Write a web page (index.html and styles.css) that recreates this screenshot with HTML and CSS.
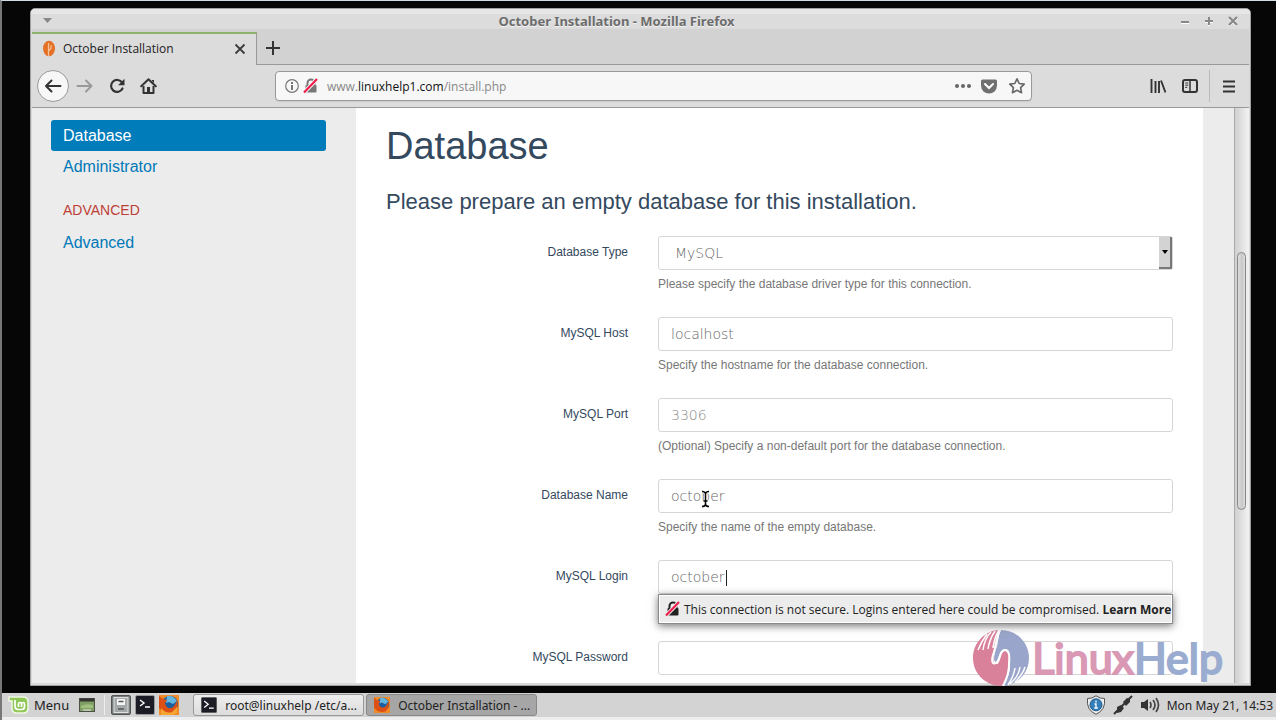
FILE: index.html
```html
<!DOCTYPE html>
<html lang="en">
<head>
<meta charset="utf-8">
<title>October Installation</title>
<link rel="stylesheet" href="styles.css">
</head>
<body>
<div class="desktop">
  <section class="window">
    <header class="titlebar">
      <button class="title-btn" aria-label="Window menu"><svg width="10" height="6"><path d="M0 0h9L4.500 5z" fill="#888"/></svg></button>
      <h1 class="window-title">October Installation - Mozilla Firefox</h1>
      <div class="window-controls">
        <button class="title-btn" aria-label="Minimize"><svg width="10" height="10"><path d="M1 7h8" stroke="#fff" stroke-width="2"/><path d="M1 6h8" stroke="#888" stroke-width="2"/></svg></button>
        <button class="title-btn" aria-label="Maximize"><svg width="10" height="10"><path d="M1 6h8M5 2v8" stroke="#fff" stroke-width="2"/><path d="M1 5h8M5 1v8" stroke="#888" stroke-width="2"/></svg></button>
        <button class="title-btn" aria-label="Close"><svg width="10" height="10"><path d="M1 2l8 8M9 2l-8 8" stroke="#fff" stroke-width="2"/><path d="M1 1l8 8M9 1l-8 8" stroke="#888" stroke-width="2.200"/></svg></button>
      </div>
    </header>
    <div class="browser">
      <nav class="tabs" aria-label="Tabs">
        <div class="tab">
          <svg width="14" height="17" viewBox="0 0 14 17"><ellipse cx="7" cy="8.500" rx="6" ry="7.800" fill="#e37226"/><path d="M6.500 3v13M6.500 11l2.500-2.500V5" stroke="#f6c39c" stroke-width="1.200" fill="none"/></svg>
          <span class="tab-label">October Installation</span>
          <button class="icon-btn" aria-label="Close tab"><svg width="12" height="12"><path d="M1.500 1.500l9 9M10.500 1.500l-9 9" stroke="#3c3c3c" stroke-width="1.800"/></svg></button>
        </div>
        <button class="icon-btn new-tab" aria-label="New tab"><svg width="14" height="14"><path d="M0 7h14M7 0v14" stroke="#333" stroke-width="2"/></svg></button>
      </nav>
      <div class="toolbar">
        <div class="nav-buttons">
          <button class="icon-btn back" aria-label="Back"><svg width="18" height="14" viewBox="0 0 18 14"><path d="M2 7h14.500M7.500 1.500L2 7l5.500 5.500" fill="none" stroke="#333" stroke-width="2" stroke-linecap="round" stroke-linejoin="round"/></svg></button>
          <button class="icon-btn" aria-label="Forward"><svg width="18" height="14" viewBox="0 0 18 14"><path d="M1.500 7H15M10 1.500L15.500 7 10 12.500" fill="none" stroke="#999" stroke-width="2" stroke-linecap="round" stroke-linejoin="round"/></svg></button>
          <button class="icon-btn" aria-label="Reload"><svg width="16" height="16" viewBox="0 0 16 16"><path d="M13.200 4.800A6 6 0 1 0 13.500 10.500" fill="none" stroke="#333" stroke-width="2.200" stroke-linecap="round"/><path d="M15.500.8v6.400H9.100z" fill="#333"/></svg></button>
          <button class="icon-btn" aria-label="Home"><svg width="17" height="16" viewBox="0 0 17 16"><path d="M1.200 8.200L8.500 1.200l7.300 7" fill="none" stroke="#333" stroke-width="2" stroke-linecap="round" stroke-linejoin="round"/><path d="M3.500 8v7h10V8" fill="none" stroke="#333" stroke-width="2" stroke-linejoin="round"/><path d="M7 9h3v6H7zM12 2h2v3l-2-2z" fill="#333"/></svg></button>
        </div>
        <div class="urlbar">
          <svg width="14" height="14" viewBox="0 0 14 14"><circle cx="7" cy="7" r="6.300" fill="none" stroke="#777" stroke-width="1.200"/><path d="M7 3v2M7 6v5" stroke="#666" stroke-width="1.800"/></svg>
          <svg width="16" height="16" viewBox="0 0 16 16"><path d="M4.500 8V5a3.500 3.500 0 0 1 7 0v3" fill="none" stroke="#777" stroke-width="2"/><rect x="2.500" y="7" width="11" height="7.500" rx="1" fill="#777"/><path d="M1 14.500L14 1" stroke="#f4f4f4" stroke-width="4"/><path d="M1 14.500L14 1" stroke="#f01848" stroke-width="2"/></svg>
          <a class="url" href="#">www.<b>linuxhelp1.com</b>/install.php</a>
          <svg class="more" width="18" height="6"><g fill="#666"><circle cx="3" cy="3" r="2"/><circle cx="9" cy="3" r="2"/><circle cx="15" cy="3" r="2"/></g></svg>
          <svg width="16" height="15" viewBox="0 0 16 15"><path d="M1.500.5h13q1.500 0 1.500 1.500v4.500a8 8 0 0 1-16 0V2Q0 .5 1.500.5z" fill="#707070"/><path d="M4 5l4 4 4-4" fill="none" stroke="#fff" stroke-width="2" stroke-linecap="round"/></svg>
          <svg width="18" height="18" viewBox="0 0 18 18"><path d="M9 1.800l2.200 4.700 5 .7-3.600 3.500.9 5L9 13.300l-4.500 2.400.9-5L1.800 7.200l5-.7z" fill="none" stroke="#6a6a6a" stroke-width="1.700" stroke-linejoin="round"/></svg>
        </div>
        <div class="tools">
          <button class="icon-btn" aria-label="Library"><svg width="16" height="14" viewBox="0 0 16 14"><path d="M1.500 0v14M5.500 2v12M9 2v12M11 1.500l4.500 12" stroke="#333" stroke-width="1.900"/></svg></button>
          <button class="icon-btn" aria-label="Sidebars"><svg width="16" height="14" viewBox="0 0 16 14"><rect x="1" y="1" width="14" height="12" rx="2" fill="none" stroke="#333" stroke-width="2"/><path d="M8 1v12" stroke="#333" stroke-width="1.500"/><path d="M3.200 4h3M3.200 6.200h3M3.200 8.400h2" stroke="#333"/></svg></button>
          <span class="divider"></span>
          <button class="icon-btn" aria-label="Open menu"><svg width="12" height="13"><path d="M0 1.500h12M0 6.500h12M0 11.500h12" stroke="#333" stroke-width="2"/></svg></button>
        </div>
      </div>
      <div class="page">
        <aside class="sidebar">
          <a class="side-link active" href="#">Database</a>
          <a class="side-link" href="#">Administrator</a>
          <h2 class="side-heading">ADVANCED</h2>
          <a class="side-link" href="#">Advanced</a>
        </aside>
        <main class="content">
          <h2 class="heading">Database</h2>
          <p class="lead">Please prepare an empty database for this installation.</p>
          <form class="form">
            <div class="row"><label for="type">Database Type</label><div class="field">
              <div class="select-box"><select class="control" id="type"><option>MySQL</option></select><span class="select-arrow"><svg width="6" height="4"><path d="M0 0h6L3 4z"/></svg></span></div>
              <p class="help">Please specify the database driver type for this connection.</p></div></div>
            <div class="row"><label for="host">MySQL Host</label><div class="field">
              <input class="control" id="host" value="localhost"><p class="help">Specify the hostname for the database connection.</p></div></div>
            <div class="row"><label for="port">MySQL Port</label><div class="field">
              <input class="control" id="port" placeholder="3306"><p class="help">(Optional) Specify a non-default port for the database connection.</p></div></div>
            <div class="row"><label for="name">Database Name</label><div class="field">
              <input class="control" id="name" value="october"><p class="help">Specify the name of the empty database.</p>
              <svg class="pointer" width="9" height="18" viewBox="0 0 9 18"><path d="M1 1.500q3 0 3.500 2Q5 1.500 8 1.500M1 16.500q3 0 3.500-2 .5 2 3.500 2M4.500 3.500v11M2.500 11h4" fill="none" stroke="#fff" stroke-width="3"/><path d="M1 1.500q3 0 3.500 2Q5 1.500 8 1.500M1 16.500q3 0 3.500-2 .5 2 3.500 2M4.500 3.500v11M2.500 11h4" fill="none" stroke="#000" stroke-width="1.500"/></svg></div></div>
            <div class="row"><label for="login">MySQL Login</label><div class="field">
              <input class="control" id="login" value="october"><span class="caret"></span>
              <div class="warning" role="alert">
                <svg width="16" height="16" viewBox="0 0 16 16"><path d="M4.500 8V5a3.500 3.500 0 0 1 7 0v3" fill="none" stroke="#222" stroke-width="2"/><rect x="2.500" y="7" width="11" height="7.500" rx="1" fill="#222"/><path d="M1 14.500L14 1" stroke="#ececec" stroke-width="4"/><path d="M1 14.500L14 1" stroke="#f01848" stroke-width="2"/></svg>
                <span>This connection is not secure. Logins entered here could be compromised. <a href="#">Learn More</a></span>
              </div></div></div>
            <div class="row"><label for="password">MySQL Password</label><div class="field">
              <input class="control" id="password" type="password"></div></div>
          </form>
        </main>
        <div class="gutter"></div>
        <div class="scrollbar"><div class="thumb"></div></div>
      </div>
    </div>
  </section>
  <div class="watermark">
    <svg width="56" height="56" viewBox="0 0 56 56">
      <path d="M27 0C12 0 0 13 0 28s12 28 29 28c4-6 6-12 6-19 0-6 4-16-3-16-5 0-4 12-8 13-6 1-3-11-1-17 1-6 1-11 4-17z" fill="#d9809b"/>
      <path d="M28 0c16 0 28 13 28 28S45 54 31 56c6-12 6-18 6-25 0-6 0-12-5-12-6 0-6 11-9 13-4-1-1-10 1-16 2-7 1-10 4-16z" fill="#99a5ca"/>
      <path d="M5 20C8 12 11 8 14 4M10 20c1-8 4-14 8-18M15 19c1-7 3-12 7-18M20 18c1-7 2-12 6-18M52 37c-2 7-6 11-10 15M47 37c-1 8-5 12-10 17M42 38c-1 7-3 11-7 17" fill="none" stroke="#fff" stroke-width="1.500"/>
      <path d="M27 0c-4 8-4 17-7 25-2 7 0 10 3 8 5-3 3-13 9-13 6 1 4 10 4 16 0 8-3 14-6 20" fill="none" stroke="#fff" stroke-width="2"/>
    </svg>
    <span class="brand"><span class="brand-linux">Linux</span><span class="brand-help">Help</span></span>
  </div>
</div>
<footer class="taskbar">
  <button class="menu-btn"><svg width="21" height="18" viewBox="0 0 21 18"><path d="M1 1h14q5 0 5 5v6q0 5-5 5H9q-5 0-5-5V5H1z" fill="#8fc857" stroke="#eef8e4" stroke-width="1.500"/><path d="M7 4v6q0 3.500 3 3.500h3.500q3 0 3-3V8q0-1.500-1.500-1.500T13.500 8v3M13.500 8q0-1.500-1.500-1.500T10.500 8v3" fill="none" stroke="#fff" stroke-width="1.700"/></svg>Menu</button>
  <button class="icon-btn show-desktop" aria-label="Show desktop"><svg width="16" height="14"><rect x=".5" y=".5" width="15" height="13" fill="#7f9f63" stroke="#4b5144"/><path d="M1 2h14" stroke="#333" stroke-width="3"/><path d="M2 8q6-3 12-1v3H2z" fill="#9fc07e"/><path d="M4 12h8" stroke="#eee"/></svg></button>
  <span class="separator"></span>
  <div class="launchers">
    <button class="icon-btn" aria-label="Files"><svg width="20" height="20"><rect x=".5" y=".5" width="19" height="19" rx="1.500" fill="#777c7c" stroke="#555"/><rect x="3" y="2.500" width="14" height="15" fill="#a4a8a8" stroke="#e0e0e0"/><path d="M6 4h8v6H6z" fill="#f5f5f5"/><path d="M7.500 6.500h5M7 14h6" stroke="#555" stroke-width="1.500"/></svg></button>
    <button class="icon-btn" aria-label="Terminal"><svg width="20" height="20"><rect x=".5" y=".5" width="19" height="19" rx="1.500" fill="#1c1c27" stroke="#999"/><path d="M5 5l4 3-4 3M10 12h5" fill="none" stroke="#fff" stroke-width="1.400"/></svg></button>
    <button class="icon-btn" aria-label="Firefox"><svg width="20" height="20" viewBox="0 0 20 20"><path d="M0 0h20v20H0z" fill="#f08a28"/><circle cx="11" cy="9" r="8" fill="#1d5f9e"/><path d="M8 1q6-1 10 5l-4 3-4-2-3 1z" fill="#63b6df"/><path d="M0 1l4 3 4 1-2 3q1 6 6 5 4-1 6-8 2 9-4 13-8 3-14-5z" fill="#dc5015"/><path d="M2 13q5 6 11 4l5-5v6l-5 2H2z" fill="#f6a530"/></svg></button>
  </div>
  <div class="tasks">
    <button class="task"><svg width="16" height="16" viewBox="0 0 20 20"><rect x=".5" y=".5" width="19" height="19" rx="1.500" fill="#1c1c27" stroke="#555"/><path d="M4 5l5 4-5 4M10 14h6" fill="none" stroke="#fff" stroke-width="1.600"/></svg>root@linuxhelp /etc/a...</button>
    <button class="task current"><svg width="16" height="16" viewBox="0 0 20 20"><path d="M0 0h20v20H0z" fill="#f08a28"/><circle cx="11" cy="9" r="8" fill="#1d5f9e"/><path d="M8 1q6-1 10 5l-4 3-4-2-3 1z" fill="#63b6df"/><path d="M0 1l4 3 4 1-2 3q1 6 6 5 4-1 6-8 2 9-4 13-8 3-14-5z" fill="#dc5015"/></svg>October Installation - ...</button>
  </div>
  <div class="tray">
    <svg width="20" height="20" viewBox="0 0 20 20"><path d="M10 .8q4 3 8.500 2.700Q20 15 10 19.300 0 15 1.500 3.500 6 3.800 10 .8z" fill="#eee" stroke="#555"/><circle cx="10" cy="9.800" r="6" fill="#347fb9" stroke="#205d8e"/><path d="M10 5.500v2M8.500 9H10v4M8.300 13h3.500" fill="none" stroke="#fff" stroke-width="1.300"/></svg>
    <svg width="20" height="20" viewBox="0 0 20 20"><path d="M1 19l5-5M14 6l5-5" stroke="#333" stroke-width="2"/><path d="M4 12l4-2 3 3-3 4-4 1zM10 7l4-4 3 1v3l-4 4z" fill="#333"/><path d="M8 12l4-4" stroke="#333" stroke-width="2"/></svg>
    <svg width="20" height="18" viewBox="0 0 20 18"><path d="M1 6h3l4-3v12l-4-3H1z" fill="#333"/><path d="M10 6q2 3 0 6M13 4q4 5 0 10M16 2q5 7 0 14" fill="none" stroke="#444" stroke-width="1.700"/></svg>
    <time class="clock">Mon May 21, 14:53</time>
  </div>
</footer>
</body>
</html>
```
FILE: styles.css
```css
* { box-sizing: border-box; }
body {
  margin: 0;
  height: 100vh;
  display: flex;
  flex-direction: column;
  overflow: hidden;
  background: #060606;
  border-top: 1px solid #cfdde6;
  border-left: 2px solid #777;
  font-family: "Noto Sans", sans-serif;
  font-size: 12px;
  color: #222;
}
h1, h2, p { margin: 0; font-weight: 400; }
button { font: inherit; color: inherit; border: 0; background: none; padding: 0; }
a { color: inherit; text-decoration: none; }
svg { display: block; flex: none; }
.desktop { flex: 1; min-height: 0; display: flex; padding: 7px 25px 7px 28px; position: relative; }
.window {
  flex: 1; min-width: 0; display: flex; flex-direction: column;
  border: 1px solid #a0a0a0; border-radius: 5px 5px 0 0;
  background: #d9d9d9; padding: 0 1px 2px;
  overflow: hidden;
}
.titlebar {
  height: 20px; flex: none; display: flex; align-items: center; padding: 4px 12px 0;
  background: linear-gradient(#e6e6e6 5px, #dcdcdc 5px);
  margin: 0 -1px;
}
.window-title { flex: 1; text-align: center; font-size: 13px; line-height: 16px; font-weight: 700; color: #6c6c6c; text-shadow: 0 1px #f4f4f4; }
.window-controls { display: flex; gap: 14px; }
.browser { flex: 1; min-height: 0; display: flex; flex-direction: column; font-family: "Open Sans", sans-serif; }
.tabs { height: 36px; flex: none; display: flex; background: #d2d2d2; box-shadow: inset 0 -1px #999; }
.tab {
  width: 225px; margin-top: 3px; padding: 0 10px 2px; display: flex; align-items: center; gap: 7px;
  background: #dcdcdc; border-top: 2px solid #8db26e; border-right: 1px solid #999;
}
.tab-label { flex: 1; white-space: nowrap; }
.new-tab { padding: 2px 9px 0; }
.icon-btn { display: flex; align-items: center; justify-content: center; }
.toolbar { flex: none; height: 43px; display: flex; align-items: center; background: #dcdcdc; border-bottom: 1px solid #999; padding: 0 14px 0 5px; }
.nav-buttons { display: flex; align-items: center; gap: 15px; width: 238px; }
.back { width: 32px; height: 32px; border: 1px solid #999; border-radius: 50%; background: #f7f7f7; margin-right: -8px; }
.urlbar {
  flex: 1; height: 30px; display: flex; align-items: center; gap: 4px; padding: 0 5px 0 9px; margin-right: 118px;
  background: #f7f7f7; border: 1px solid #999; border-radius: 4px; box-shadow: 0 1px 1px #ccc;
}
.url { color: #888; flex: 1; padding-left: 4px; white-space: nowrap; }
.url b { font-weight: 400; color: #111; }
.urlbar .more { margin-right: 5px; }
.urlbar svg:last-child { margin-left: 7px; }
.tools { display: flex; align-items: center; gap: 16px; }
.divider { width: 1px; height: 32px; background: #bbb; margin: 0 -3px 0 -5px; }
.page { flex: 1; min-height: 0; display: flex; background: #ececec; overflow: hidden; font-family: "Liberation Sans", sans-serif; }
.sidebar { width: 324px; flex: none; padding: 12px 30px 0 19px; font-size: 16px; color: #0079b8; }
.side-link { display: block; line-height: 31px; padding: 0 12px; border-radius: 3px; }
.side-link.active { background: #007cba; color: #fff; }
.side-heading { font-size: 14px; line-height: 20px; color: #bd3f36; margin: 18px 12px 7px; }
.content { flex: 1; min-width: 0; background: #fff; padding: 16px 30px 0; color: #34495e; }
.heading { font-size: 38px; line-height: 44px; }
.lead { font-size: 22px; line-height: 30px; margin: 19px 0; white-space: nowrap; }
.row { display: grid; grid-template-columns: 242px 1fr; column-gap: 30px; height: 81px; }
.row label { text-align: right; line-height: 32px; }
.field { position: relative; }
.control {
  display: block; width: 100%; height: 34px; margin: 0; padding: 0 12px; border: 1px solid #d6d6d6; border-radius: 3px;
  background: #fff; color: #666; font: 200 14px "DejaVu Sans", sans-serif; outline: 0; appearance: none;
}
.control::placeholder { color: #888; }
select.control { padding-left: 16px; }
.select-box { position: relative; }
.select-arrow {
  position: absolute; top: 1px; right: 1px; bottom: 1px; width: 13px; display: flex; align-items: center; justify-content: center;
  background: #d3d3d3; border: solid #777; border-width: 0 2px 2px 0; pointer-events: none;
}
.help { color: #777; line-height: 16px; margin-top: 6px; }
.pointer { position: absolute; left: 43px; top: 11px; }
.caret { position: absolute; left: 68px; top: 10px; width: 1px; height: 16px; background: #222; }
.warning {
  position: absolute; z-index: 1; top: 34px; left: 0; right: 0; height: 30px; display: flex; align-items: center; gap: 3px; padding: 0 0 0 6px;
  background: #ececec; border: 1px solid #8a8a8a; box-shadow: inset 0 0 0 1px #fff, 0 2px 8px #777;
  font-family: "Open Sans", sans-serif; color: #222; white-space: nowrap;
}
.warning a { font-weight: 700; }
.gutter { width: 31px; flex: none; }
.scrollbar { width: 15px; flex: none; padding: 144px 3px 0 2px; border-left: 1px solid #aaa; background: linear-gradient(90deg, #d0d0d0, #f3f3f3); }
.thumb { height: 258px; border: 1px solid #888; border-radius: 5px; background: linear-gradient(90deg, #ddd, #c8c8c8 60%, #e0e0e0); }
.watermark { position: absolute; right: 53px; bottom: 7px; display: flex; align-items: center; gap: 3px; }
.brand { font: 400 43px/56px Lato, sans-serif; }
.brand-linux { color: #d998b4; -webkit-text-stroke: 2px #d998b4; }
.brand-help { color: #9aaccf; -webkit-text-stroke: 2px #9aaccf; }
.taskbar { height: 27px; flex: none; display: flex; align-items: center; background: #d3d3d3; border-bottom: 3px solid #eee; padding: 0 3px 0 6px; }
.menu-btn { display: flex; align-items: center; gap: 5px; font-size: 13px; margin-right: 10px; }
.separator { width: 1px; height: 20px; background: #eee; margin: 0 6px 0 9px; }
.launchers { display: flex; gap: 4px; margin-right: 14px; }
.tasks { display: flex; gap: 2px; flex: 1; }
.task {
  width: 171px; height: 22px; display: flex; align-items: center; gap: 8px; padding: 0 7px;
  border: 1px solid #999; border-radius: 3px; background: linear-gradient(#eee, #dcdcdc); white-space: nowrap;
}
.task.current { background: #a6a6a6; border-color: #888; }
.tray { display: flex; align-items: center; gap: 7px; }
.clock { white-space: nowrap; }
```
